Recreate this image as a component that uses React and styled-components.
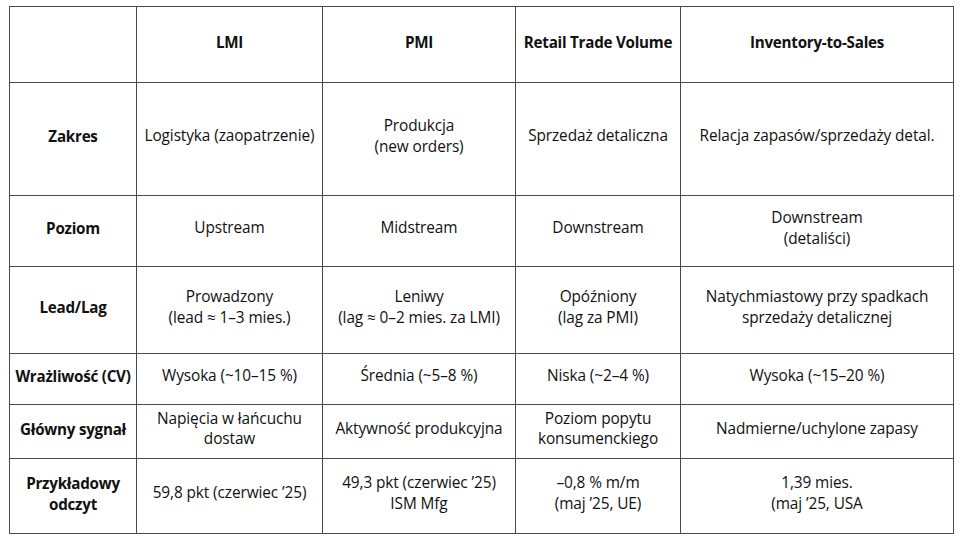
import React from "react";
import styled, { createGlobalStyle } from "styled-components";

const GlobalStyle = createGlobalStyle`
  body {
    margin: 0;
    background: #ffffff;
  }
`;

const Page = styled.div`
  width: 960px;
  height: 540px;
  padding: 6px 0 0 9px;
  box-sizing: border-box;
  background: #ffffff;
  font-family: "Open Sans", Lato, sans-serif;
  color: #111;
`;

const Table = styled.table`
  border-collapse: collapse;
  table-layout: fixed;
  width: 945px;
`;

const Row = styled.tr`
  height: ${(p) => p.h}px;
`;

const Cell = styled.td`
  border: 1px solid #4a4a4a;
  padding: 0 1px 5px;
  text-align: center;
  vertical-align: middle;
  font-size: ${(p) => (p.bold ? "15.2px" : "15.4px")};
  line-height: 20.5px;
  font-weight: ${(p) => (p.bold ? 700 : 400)};
  letter-spacing: ${(p) => (p.bold ? "-0.25px" : "-0.1px")};
  white-space: pre-line;
`;

const widths = [127, 186, 193, 165, 273];

const header = ["", "LMI", "PMI", "Retail Trade Volume", "Inventory-to-Sales"];

const rows = [
  {
    h: 113,
    label: "Zakres",
    cells: [
      "Logistyka (zaopatrzenie)",
      "Produkcja\n(new orders)",
      "Sprzedaż detaliczna",
      "Relacja zapasów/sprzedaży detal.",
    ],
  },
  {
    h: 71,
    label: "Poziom",
    cells: ["Upstream", "Midstream", "Downstream", "Downstream\n(detaliści)"],
  },
  {
    h: 87,
    label: "Lead/Lag",
    cells: [
      "Prowadzony\n(lead ≈ 1–3 mies.)",
      "Leniwy\n(lag ≈ 0–2 mies. za LMI)",
      "Opóźniony\n(lag za PMI)",
      "Natychmiastowy przy spadkach\nsprzedaży detalicznej",
    ],
  },
  {
    h: 51,
    label: "Wrażliwość (CV)",
    cells: [
      "Wysoka (~10–15 %)",
      "Średnia (~5–8 %)",
      "Niska (~2–4 %)",
      "Wysoka (~15–20 %)",
    ],
  },
  {
    h: 54,
    label: "Główny sygnał",
    cells: [
      "Napięcia w łańcuchu\ndostaw",
      "Aktywność produkcyjna",
      "Poziom popytu\nkonsumenckiego",
      "Nadmierne/uchylone zapasy",
    ],
  },
  {
    h: 75,
    label: "Przykładowy\nodczyt",
    cells: [
      "59,8 pkt (czerwiec ’25)",
      "49,3 pkt (czerwiec ’25)\nISM Mfg",
      "–0,8 % m/m\n(maj ’25, UE)",
      "1,39 mies.\n(maj ’25, USA",
    ],
  },
];

const App = () => {
  return (
    <Page>
      <GlobalStyle />
      <Table>
        <colgroup>
          {widths.map((w, i) => (
            <col key={i} style={{ width: w }} />
          ))}
        </colgroup>
        <tbody>
          <Row h={76}>
            {header.map((t, i) => (
              <Cell key={i} bold>
                {t}
              </Cell>
            ))}
          </Row>
          {rows.map((r, i) => (
            <Row key={i} h={r.h}>
              <Cell bold>{r.label}</Cell>
              {r.cells.map((c, j) => (
                <Cell key={j}>{c}</Cell>
              ))}
            </Row>
          ))}
        </tbody>
      </Table>
    </Page>
  );
};

export default App;
